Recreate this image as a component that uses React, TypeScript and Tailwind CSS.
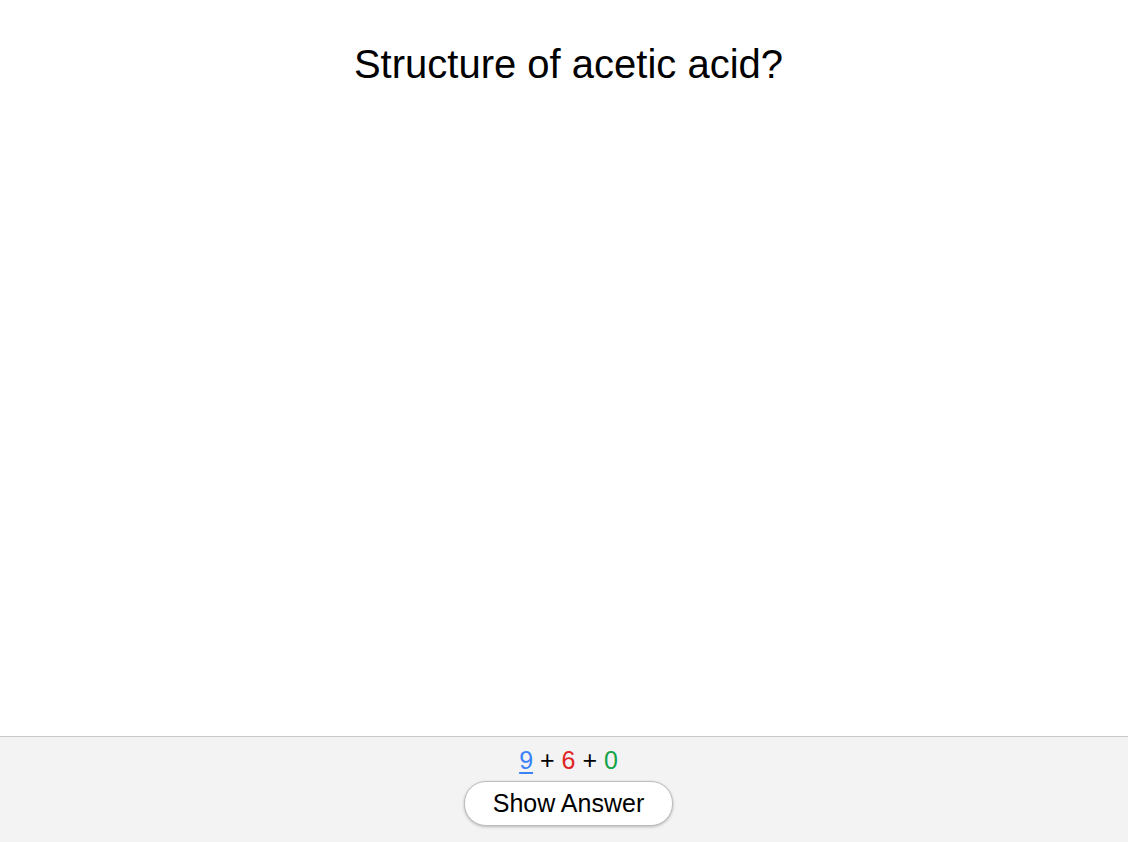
import React from 'react';

export default function App() {
  const font = { fontFamily: '"Liberation Sans", Arial, sans-serif' };
  return (
    <div className="flex h-[842px] flex-col bg-white pl-[9px] text-black" style={font}>
      <div className="flex-1 pt-[39px] text-center">
        <div className="text-[40px] leading-[50px]">Structure of acetic acid?</div>
      </div>
      <div className="-ml-[9px] flex h-[106px] flex-col items-center border-t border-[#c8c8c8] bg-[#f3f3f3] pl-[9px] pt-[8px]">
        <div className="text-[25px] leading-[30px]">
          <span className="text-[#3b82f6] underline underline-offset-[3px]">9</span>
          <span> + </span>
          <span className="text-[#e02424]">6</span>
          <span> + </span>
          <span className="text-[#16a34a]">0</span>
        </div>
        <button
          type="button"
          className="mt-[6px] h-[45px] w-[209px] rounded-[22px] border border-[#bdbdbd] bg-white text-[25px] text-black shadow-[0_1px_3px_rgba(0,0,0,0.25)]"
        >
          Show Answer
        </button>
      </div>
    </div>
  );
}
